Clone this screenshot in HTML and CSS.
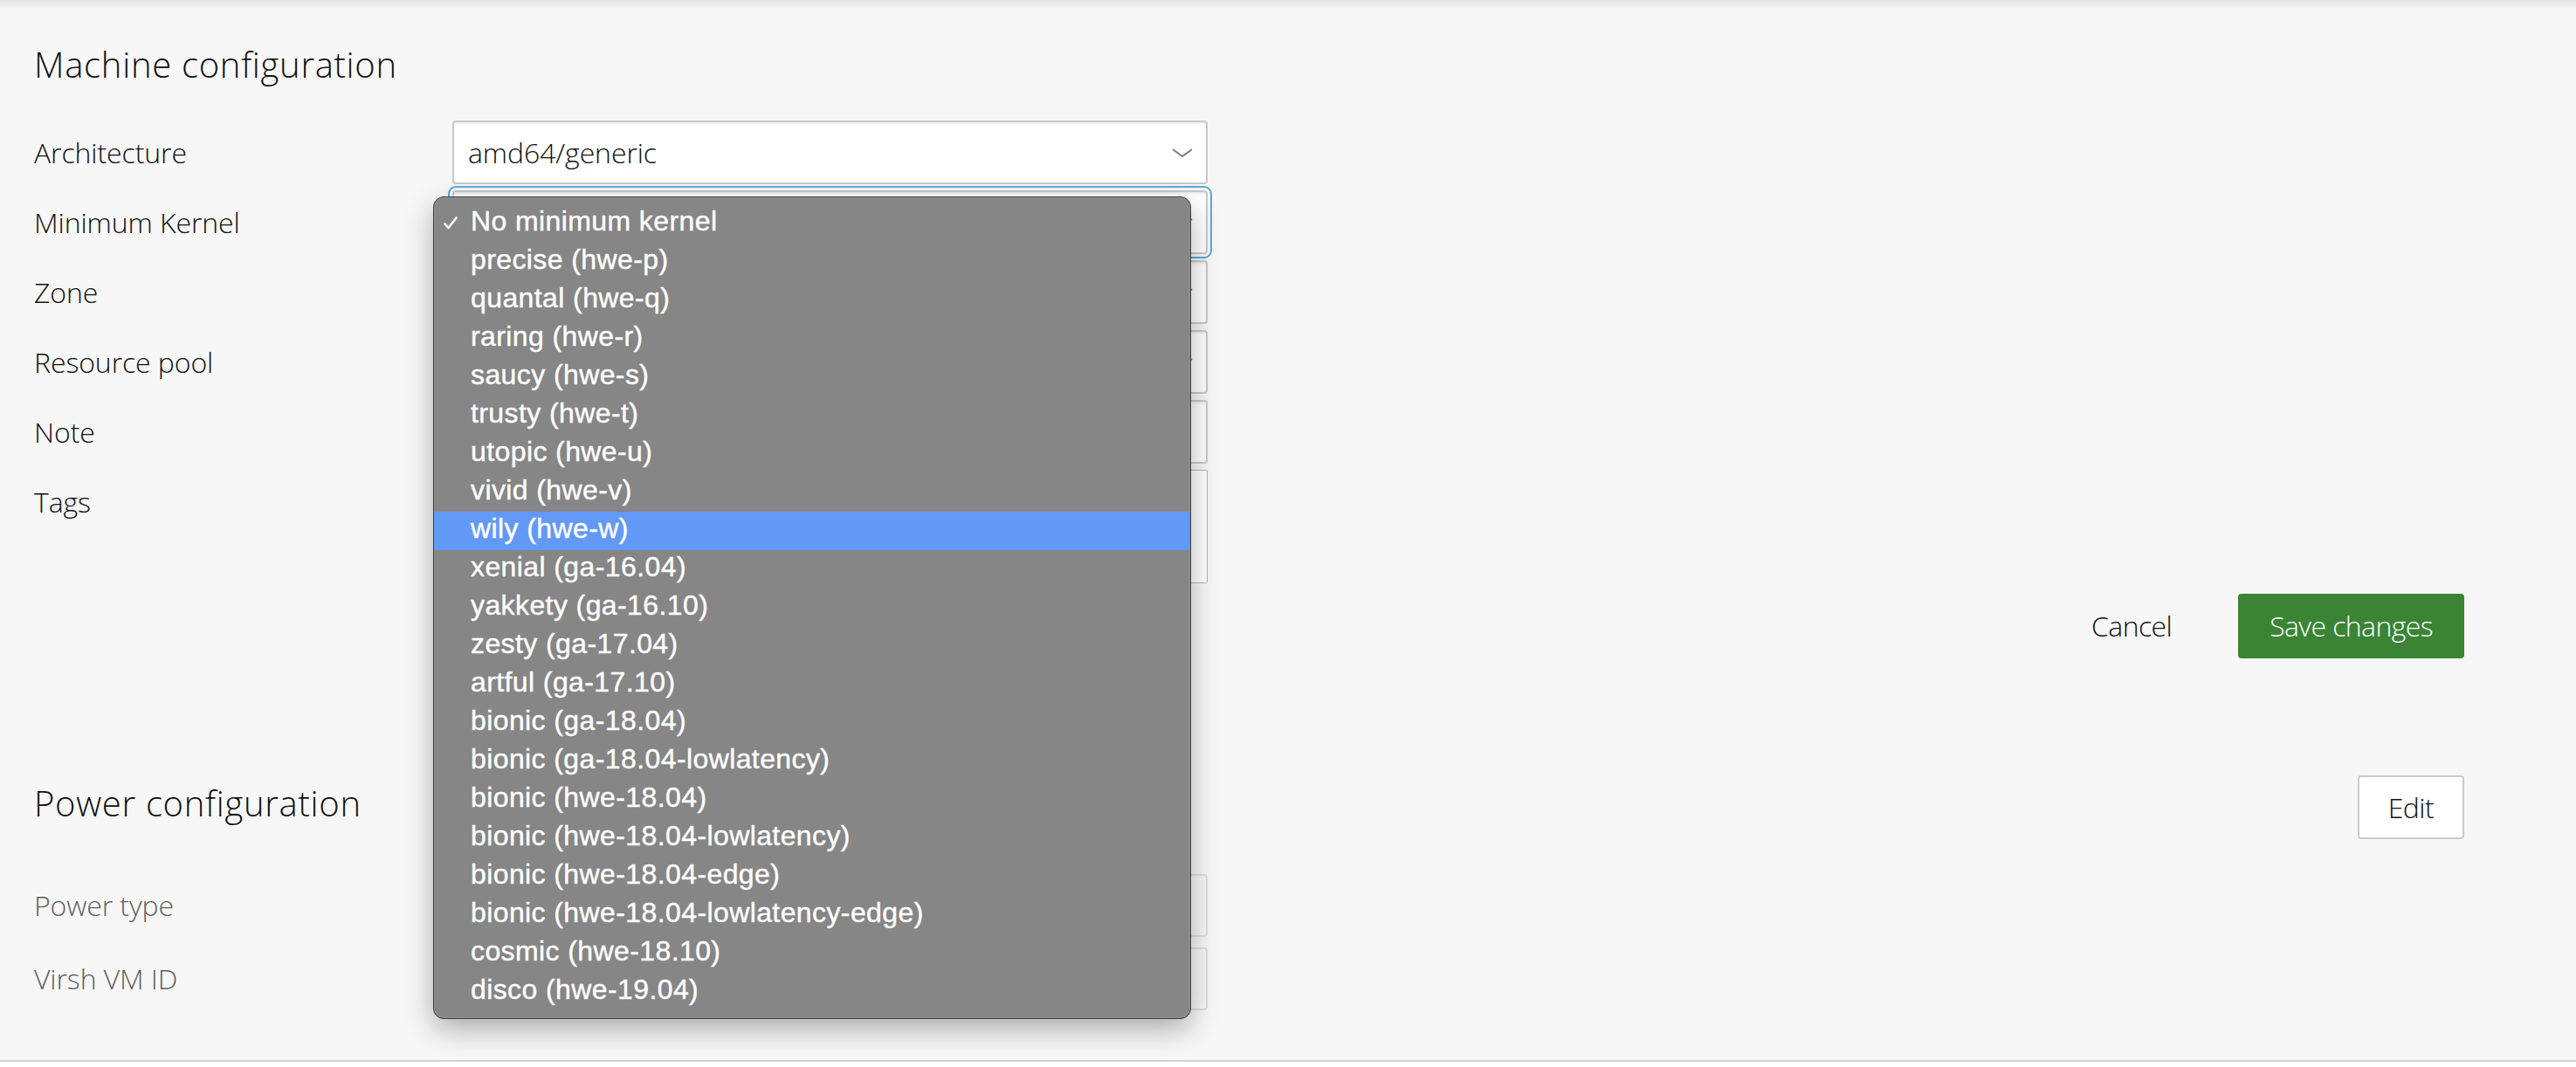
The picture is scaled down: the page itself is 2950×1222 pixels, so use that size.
FILE: index.html
```html
<!DOCTYPE html>
<html lang="en">
<head>
<meta charset="utf-8">
<title>Machine configuration</title>
<link rel="stylesheet" href="styles.css">
</head>
<body>
<div class="page">
  <section class="card">
    <h2 class="card-title">Machine configuration</h2>
    <form class="config-form">
      <div class="form-row">
        <label class="form-label">Architecture</label>
        <div class="field select"><span class="select-value">amd64/generic</span><svg class="chevron" width="24" height="10" viewBox="0 0 24 10"><polyline points="1,1 12,9 23,1"/></svg></div>
      </div>
      <div class="form-row">
        <label class="form-label">Minimum Kernel</label>
        <div class="field select is-focused"><span class="select-value"></span><svg class="chevron" width="24" height="10" viewBox="0 0 24 10"><polyline points="1,1 12,9 23,1"/></svg></div>
      </div>
      <div class="form-row">
        <label class="form-label">Zone</label>
        <div class="field select"><span class="select-value"></span><svg class="chevron" width="24" height="10" viewBox="0 0 24 10"><polyline points="1,1 12,9 23,1"/></svg></div>
      </div>
      <div class="form-row">
        <label class="form-label">Resource pool</label>
        <div class="field select"><span class="select-value"></span><svg class="chevron" width="24" height="10" viewBox="0 0 24 10"><polyline points="1,1 12,9 23,1"/></svg></div>
      </div>
      <div class="form-row">
        <label class="form-label">Note</label>
        <div class="field"></div>
      </div>
      <div class="form-row">
        <label class="form-label">Tags</label>
        <div class="field tags"></div>
      </div>
      <div class="form-actions">
        <button type="button" class="btn btn-base">Cancel</button>
        <button type="button" class="btn btn-positive">Save changes</button>
      </div>
    </form>
  </section>

  <section class="card power">
    <div class="card-header">
      <h2 class="card-title">Power configuration</h2>
      <button type="button" class="btn btn-neutral">Edit</button>
    </div>
    <div class="power-rows">
      <div class="form-row power-row">
        <label class="form-label muted">Power type</label>
        <div class="field disabled"></div>
      </div>
      <div class="form-row power-row">
        <label class="form-label muted">Virsh VM ID</label>
        <div class="field disabled"></div>
      </div>
    </div>
  </section>

  <ul class="dropdown-menu">
    <li class="menu-item is-checked"><svg class="check" width="16" height="15" viewBox="0 0 16 15"><polyline points="1.5,8.5 5.5,13 14.5,1.5"/></svg>No minimum kernel</li>
    <li class="menu-item">precise (hwe-p)</li>
    <li class="menu-item">quantal (hwe-q)</li>
    <li class="menu-item">raring (hwe-r)</li>
    <li class="menu-item">saucy (hwe-s)</li>
    <li class="menu-item">trusty (hwe-t)</li>
    <li class="menu-item">utopic (hwe-u)</li>
    <li class="menu-item">vivid (hwe-v)</li>
    <li class="menu-item is-active">wily (hwe-w)</li>
    <li class="menu-item">xenial (ga-16.04)</li>
    <li class="menu-item">yakkety (ga-16.10)</li>
    <li class="menu-item">zesty (ga-17.04)</li>
    <li class="menu-item">artful (ga-17.10)</li>
    <li class="menu-item">bionic (ga-18.04)</li>
    <li class="menu-item">bionic (ga-18.04-lowlatency)</li>
    <li class="menu-item">bionic (hwe-18.04)</li>
    <li class="menu-item">bionic (hwe-18.04-lowlatency)</li>
    <li class="menu-item">bionic (hwe-18.04-edge)</li>
    <li class="menu-item">bionic (hwe-18.04-lowlatency-edge)</li>
    <li class="menu-item">cosmic (hwe-18.10)</li>
    <li class="menu-item">disco (hwe-19.04)</li>
  </ul>
</div>
</body>
</html>
```

FILE: styles.css
```css
* {
  box-sizing: border-box;
}

html, body {
  margin: 0;
  padding: 0;
}

body {
  background: #ffffff;
  font-family: "Open Sans", "Noto Sans", sans-serif;
  font-weight: 300;
  color: #111111;
}

.page {
  position: relative;
  height: 1216px;
  padding: 0 128px 0 39px;
  background-color: #f7f7f7;
  background-image: linear-gradient(to bottom, #e2e2e2 0, #f7f7f7 10px);
  background-repeat: no-repeat;
  background-size: 100% 10px;
  border-bottom: 2px solid #d3d3d3;
}

.card {
  padding-top: 50px;
}

.card-title {
  margin: 0 0 40px;
  font-size: 40px;
  line-height: 48px;
  font-weight: 300;
  letter-spacing: 0.7px;
  color: #111111;
}

.config-form {
  display: flex;
  flex-direction: column;
}

.form-row {
  display: grid;
  grid-template-columns: 479px 865px;
  margin-bottom: 7px;
}

.form-label {
  font-size: 32px;
  line-height: 73px;
  letter-spacing: -0.1px;
  color: #111111;
}

.field {
  height: 73px;
  border: 2px solid #c9c9c9;
  border-radius: 4px;
  background: #ffffff;
  box-shadow: inset 0 2px 2px rgba(0, 0, 0, 0.07);
  padding: 0 15px 0 16px;
  font-size: 32px;
  line-height: 69px;
  letter-spacing: -0.1px;
}

.select {
  display: flex;
  align-items: center;
  justify-content: space-between;
}

.select-value {
  line-height: 69px;
}

.chevron {
  display: block;
  flex: none;
}

.chevron polyline {
  fill: none;
  stroke: #7b7b7b;
  stroke-width: 2;
}

.is-focused {
  outline: 2px solid #56a9e3;
  outline-offset: 3px;
}

.tags {
  height: 130px;
  border: 1px solid #b4b4b4;
  border-radius: 2px;
  box-shadow: none;
}

.form-actions {
  display: flex;
  justify-content: flex-end;
  gap: 40px;
  margin-top: 5px;
}

.btn {
  height: 74px;
  padding: 0 34px;
  border: 2px solid transparent;
  border-radius: 4px;
  font-family: "Open Sans", "Noto Sans", sans-serif;
  font-weight: 300;
  font-size: 32px;
  letter-spacing: -0.6px;
  line-height: 70px;
  color: #111111;
  background: transparent;
}

.btn-positive {
  background: #3a8434;
  border-color: #3a8434;
  color: #ffffff;
}

.btn-neutral {
  height: 73px;
  line-height: 69px;
  padding: 0 33px;
  background: #ffffff;
  border-color: #cacaca;
}

.power {
  padding-top: 134px;
}

.card-header {
  display: flex;
  justify-content: space-between;
  align-items: flex-start;
}

.card-header .card-title {
  margin: 8px 0 0;
}

.power-rows {
  padding-top: 40px;
}

.power-row {
  margin-bottom: 12px;
}

.power-row .form-label {
  line-height: 72px;
}

.muted {
  color: #5f5f5f;
}

.field.disabled {
  height: 72px;
  background: transparent;
  border-color: #dedede;
  box-shadow: none;
}

.dropdown-menu {
  position: absolute;
  left: 496px;
  top: 225px;
  width: 868px;
  margin: 0;
  padding: 8px 0;
  list-style: none;
  background: #868686;
  border: 1px solid #3a3a3a;
  border-radius: 12px;
  box-shadow: inset 0 0 0 1px rgba(255, 255, 255, 0.12), 0 12px 32px rgba(0, 0, 0, 0.3);
  font-family: "Liberation Sans", Arial, sans-serif;
  font-weight: 400;
  font-size: 32px;
  letter-spacing: 0.4px;
  color: #ffffff;
  -webkit-text-stroke: 0.4px #ffffff;
  z-index: 10;
}

.menu-item {
  position: relative;
  height: 44px;
  padding: 0 0 6px 42px;
  line-height: 38px;
  white-space: nowrap;
}

.menu-item.is-active {
  background: #6399f6;
}

.check {
  position: absolute;
  left: 11px;
  top: 14px;
}

.check polyline {
  fill: none;
  stroke: #ffffff;
  stroke-width: 2.6;
  stroke-linecap: round;
  stroke-linejoin: round;
}
```
